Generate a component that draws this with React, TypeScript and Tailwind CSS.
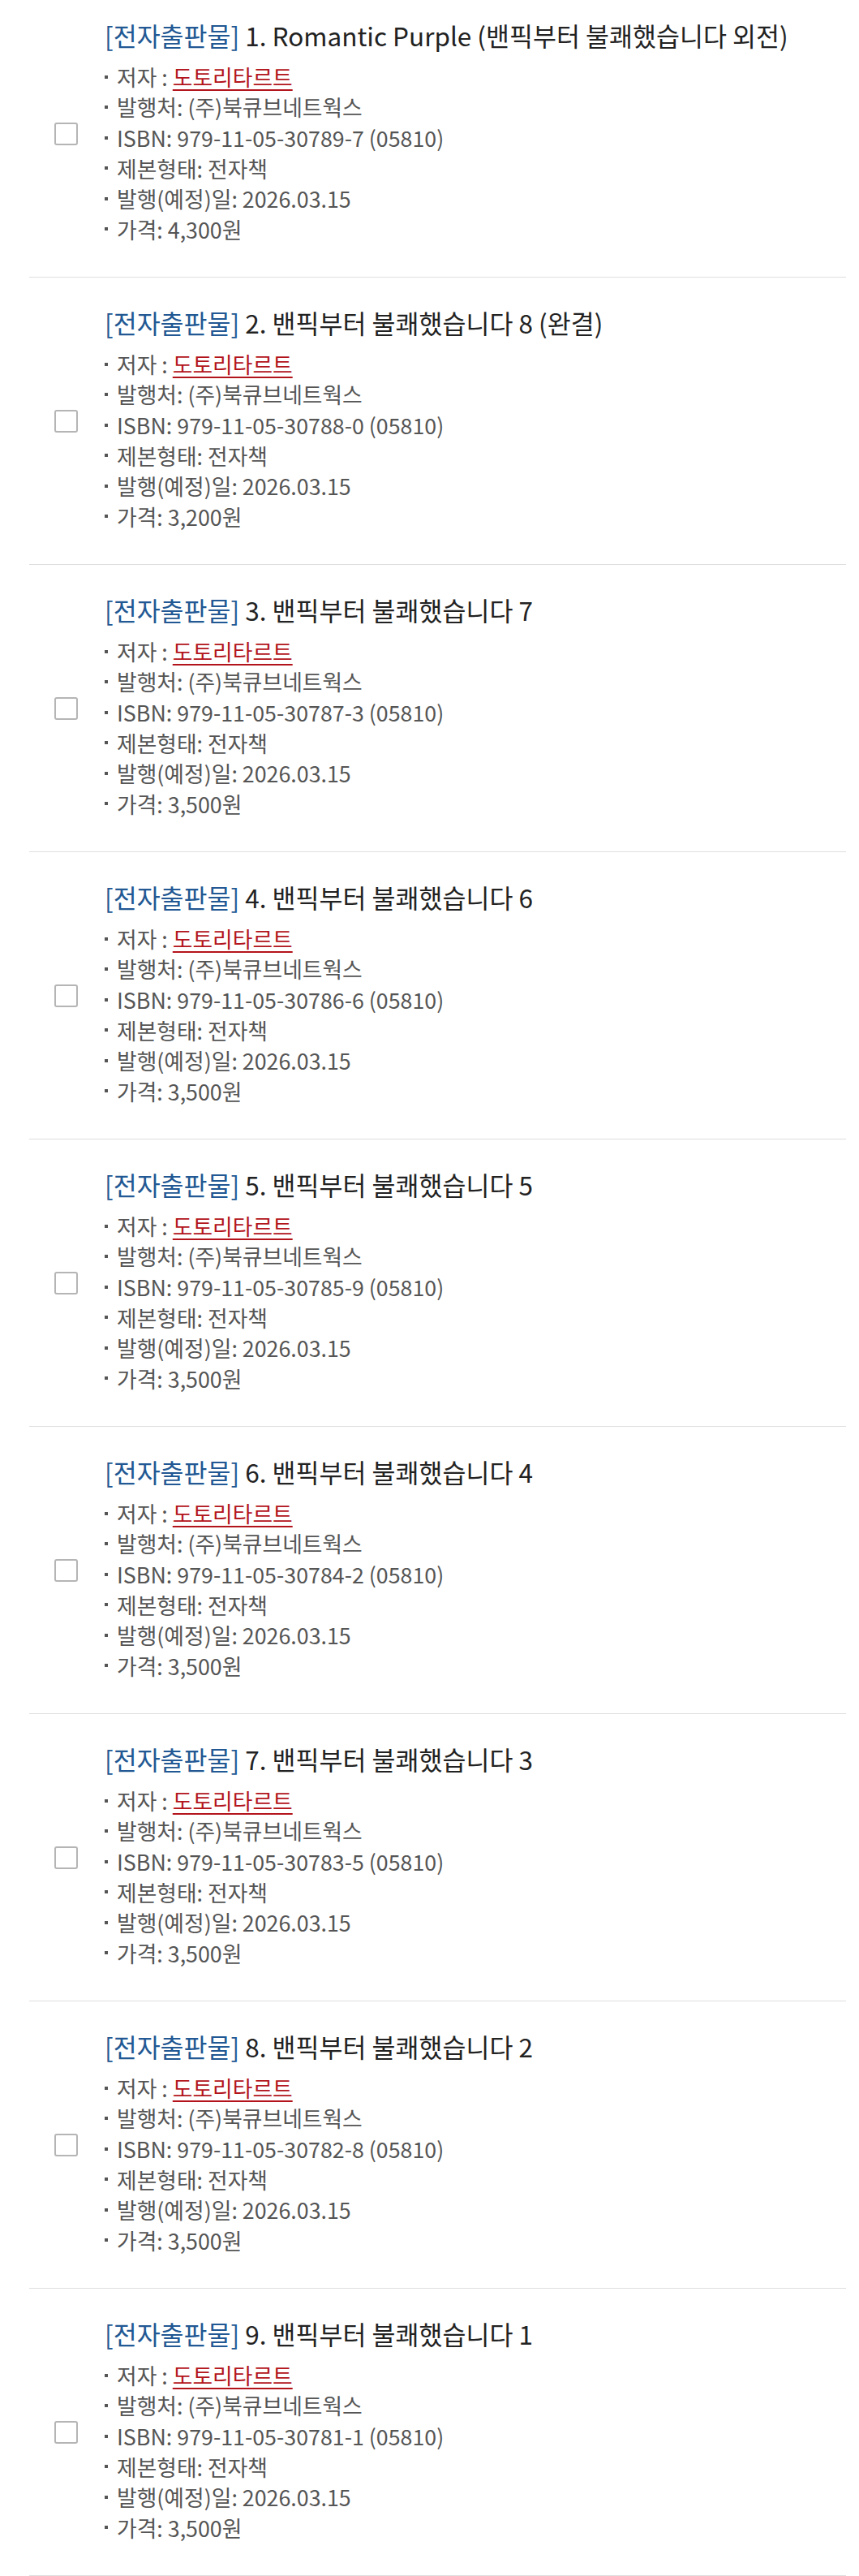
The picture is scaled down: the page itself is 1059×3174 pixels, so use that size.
const books = [
  { no: 1, title: "Romantic Purple (밴픽부터 불쾌했습니다 외전)", isbn: "979-11-05-30789-7 (05810)", price: "4,300원" },
  { no: 2, title: "밴픽부터 불쾌했습니다 8 (완결)", isbn: "979-11-05-30788-0 (05810)", price: "3,200원" },
  { no: 3, title: "밴픽부터 불쾌했습니다 7", isbn: "979-11-05-30787-3 (05810)", price: "3,500원" },
  { no: 4, title: "밴픽부터 불쾌했습니다 6", isbn: "979-11-05-30786-6 (05810)", price: "3,500원" },
  { no: 5, title: "밴픽부터 불쾌했습니다 5", isbn: "979-11-05-30785-9 (05810)", price: "3,500원" },
  { no: 6, title: "밴픽부터 불쾌했습니다 4", isbn: "979-11-05-30784-2 (05810)", price: "3,500원" },
  { no: 7, title: "밴픽부터 불쾌했습니다 3", isbn: "979-11-05-30783-5 (05810)", price: "3,500원" },
  { no: 8, title: "밴픽부터 불쾌했습니다 2", isbn: "979-11-05-30782-8 (05810)", price: "3,500원" },
  { no: 9, title: "밴픽부터 불쾌했습니다 1", isbn: "979-11-05-30781-1 (05810)", price: "3,500원" },
];

function Line({ children }: { children: React.ReactNode }) {
  return (
    <li className="flex items-center">
      <span className="mr-[11px] inline-block h-[4px] w-[4px] shrink-0 bg-[#555]" />
      <span>{children}</span>
    </li>
  );
}

function BookItem({ book }: { book: (typeof books)[number] }) {
  return (
    <li className="mb-3 ml-9 mr-4 flex h-[342px] items-center border-b border-[#dedede]">
      {/* checkbox */}
      <div className="-mt-[12px] ml-[31px] mr-[33px] h-[28px] w-[29px] shrink-0 rounded-[3px] border-2 border-[#b5b5b5] bg-white" />

      <div className="-mt-[18px]">
        <h3 className="text-[31.5px] leading-[42px] text-[#222]">
          <span className="text-[#225893]">[전자출판물]</span> {book.no}. {book.title}
        </h3>
        <ul className="mt-[12px] text-[26.8px] leading-[37.6px] text-[#555]">
          <Line>
            저자 :{" "}
            <a className="text-[#b3141b] underline decoration-2 underline-offset-[4px]">
              도토리타르트
            </a>
          </Line>
          <Line>발행처: (주)북큐브네트웍스</Line>
          <Line>ISBN: {book.isbn}</Line>
          <Line>제본형태: 전자책</Line>
          <Line>발행(예정)일: 2026.03.15</Line>
          <Line>가격: {book.price}</Line>
        </ul>
      </div>
    </li>
  );
}

export default function App() {
  return (
    <div
      className="min-h-screen bg-white"
      style={{ fontFamily: '"Noto Sans CJK KR", "Noto Sans", sans-serif' }}
    >
      <ul>
        {books.map((book) => (
          <BookItem key={book.no} book={book} />
        ))}
      </ul>
    </div>
  );
}
